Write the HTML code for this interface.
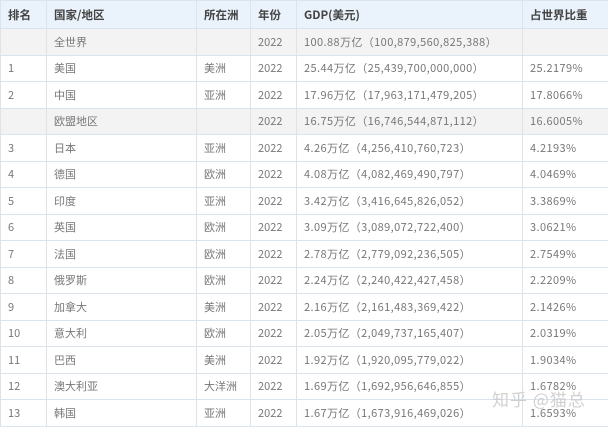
<!DOCTYPE html>
<html><head><meta charset="utf-8"><style>
*{margin:0;padding:0;box-sizing:border-box}
body{width:608px;height:425px;overflow:hidden;background:#fff;font-family:"Noto Sans CJK SC",sans-serif;font-size:11px;color:#777;position:relative}
table{border-collapse:collapse;width:609px;table-layout:fixed;position:absolute;left:0;top:0}
td,th{border:1px solid #dbe4ec;height:26.5px;padding:0 0 0 7px;text-align:left;white-space:nowrap;font-weight:normal;line-height:14px;vertical-align:middle}
td.n{letter-spacing:0.4px}
th{height:28px;background:#eaf3fb;color:#444;font-weight:bold;font-size:11.5px}
tr.g td{background:#f3f3f3}
.wm{position:absolute;left:492px;top:386px;font-size:17px;color:rgba(200,200,200,0.85);letter-spacing:1px}
</style></head><body>
<table>
<colgroup><col style="width:46px"><col style="width:150px"><col style="width:54px"><col style="width:46px"><col style="width:226px"><col style="width:87px"></colgroup>
<tr><th>排名</th><th>国家/地区</th><th>所在洲</th><th>年份</th><th>GDP(美元)</th><th>占世界比重</th></tr>
<tr class="g"><td></td><td>全世界</td><td></td><td>2022</td><td class="n">100.88万亿（100,879,560,825,388）</td><td></td></tr>
<tr><td>1</td><td>美国</td><td>美洲</td><td>2022</td><td class="n">25.44万亿（25,439,700,000,000）</td><td class="n">25.2179%</td></tr>
<tr><td>2</td><td>中国</td><td>亚洲</td><td>2022</td><td class="n">17.96万亿（17,963,171,479,205）</td><td class="n">17.8066%</td></tr>
<tr class="g"><td></td><td>欧盟地区</td><td></td><td>2022</td><td class="n">16.75万亿（16,746,544,871,112）</td><td class="n">16.6005%</td></tr>
<tr><td>3</td><td>日本</td><td>亚洲</td><td>2022</td><td class="n">4.26万亿（4,256,410,760,723）</td><td class="n">4.2193%</td></tr>
<tr><td>4</td><td>德国</td><td>欧洲</td><td>2022</td><td class="n">4.08万亿（4,082,469,490,797）</td><td class="n">4.0469%</td></tr>
<tr><td>5</td><td>印度</td><td>亚洲</td><td>2022</td><td class="n">3.42万亿（3,416,645,826,052）</td><td class="n">3.3869%</td></tr>
<tr><td>6</td><td>英国</td><td>欧洲</td><td>2022</td><td class="n">3.09万亿（3,089,072,722,400）</td><td class="n">3.0621%</td></tr>
<tr><td>7</td><td>法国</td><td>欧洲</td><td>2022</td><td class="n">2.78万亿（2,779,092,236,505）</td><td class="n">2.7549%</td></tr>
<tr><td>8</td><td>俄罗斯</td><td>欧洲</td><td>2022</td><td class="n">2.24万亿（2,240,422,427,458）</td><td class="n">2.2209%</td></tr>
<tr><td>9</td><td>加拿大</td><td>美洲</td><td>2022</td><td class="n">2.16万亿（2,161,483,369,422）</td><td class="n">2.1426%</td></tr>
<tr><td>10</td><td>意大利</td><td>欧洲</td><td>2022</td><td class="n">2.05万亿（2,049,737,165,407）</td><td class="n">2.0319%</td></tr>
<tr><td>11</td><td>巴西</td><td>美洲</td><td>2022</td><td class="n">1.92万亿（1,920,095,779,022）</td><td class="n">1.9034%</td></tr>
<tr><td>12</td><td>澳大利亚</td><td>大洋洲</td><td>2022</td><td class="n">1.69万亿（1,692,956,646,855）</td><td class="n">1.6782%</td></tr>
<tr><td>13</td><td>韩国</td><td>亚洲</td><td>2022</td><td class="n">1.67万亿（1,673,916,469,026）</td><td class="n">1.6593%</td></tr>
</table>
<div class="wm">知乎 @猫总</div>
</body></html>
